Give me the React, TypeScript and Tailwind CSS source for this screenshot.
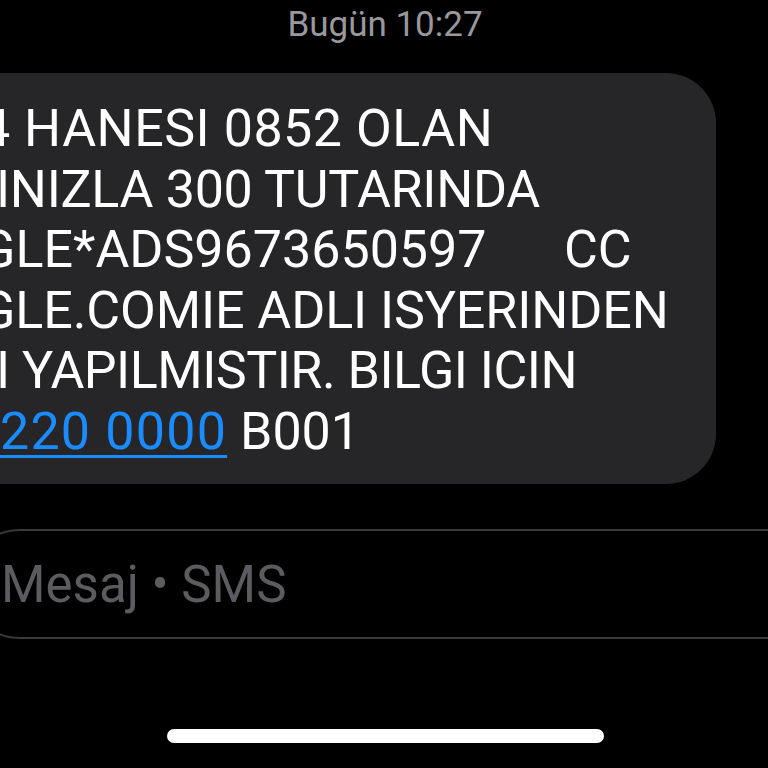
export default function App() {
  // each line is clipped on the left, as in the screenshot
  const lines: { text: string; cls: string }[] = [
    { text: '4 HANESI 0852 OLAN', cls: 'ml-[-19px] tracking-[0.5px]' },
    { text: 'INIZLA 300 TUTARINDA', cls: 'ml-[-4px] tracking-[-0.3px]' },
    { text: 'GLE*ADS9673650597      CC', cls: 'ml-[-20px]' },
    { text: 'GLE.COMIE ADLI ISYERINDEN', cls: 'ml-[-20px] tracking-[-0.1px]' },
    { text: 'I YAPILMISTIR. BILGI ICIN', cls: 'ml-[-4px] tracking-[-0.5px]' },
  ];

  return (
    <div
      className="h-[768px] w-[768px] overflow-hidden bg-black flex flex-col"
      style={{ fontFamily: 'Roboto, "Liberation Sans", sans-serif' }}
    >
      {/* timestamp */}
      <div className="mt-[4px] text-center text-[35px] leading-[42px] text-[#98989d] pl-[2px]">
        Bugün 10:27
      </div>

      {/* message bubble */}
      <div className="mt-[27px] w-[716px] rounded-r-[50px] bg-[#262628] pt-[26px] pb-[22px] overflow-hidden">
        {lines.map((l) => (
          <div
            key={l.text}
            className={`${l.cls} whitespace-pre text-[52px] leading-[60.5px] text-white`}
          >
            {l.text}
          </div>
        ))}
        <div className="whitespace-pre text-[52px] leading-[60.5px] text-white">
          <span className="text-[#1a8cff] tracking-[1.2px] underline decoration-[3px] underline-offset-[6px]">
            220 0000
          </span>{' '}
          B001
        </div>
      </div>

      {/* input field */}
      <div className="mt-[45px] ml-[-35px] w-[860px] h-[110px] rounded-[55px] border-2 border-[#38383a] flex items-center pl-[34px]">
        <span className="text-[51px] leading-none text-[#5c5c60]">Mesaj • SMS</span>
      </div>

      {/* home indicator */}
      <div className="mt-[90px] flex justify-center pl-[3px]">
        <div className="h-[14px] w-[437px] rounded-full bg-white" />
      </div>
    </div>
  );
}
